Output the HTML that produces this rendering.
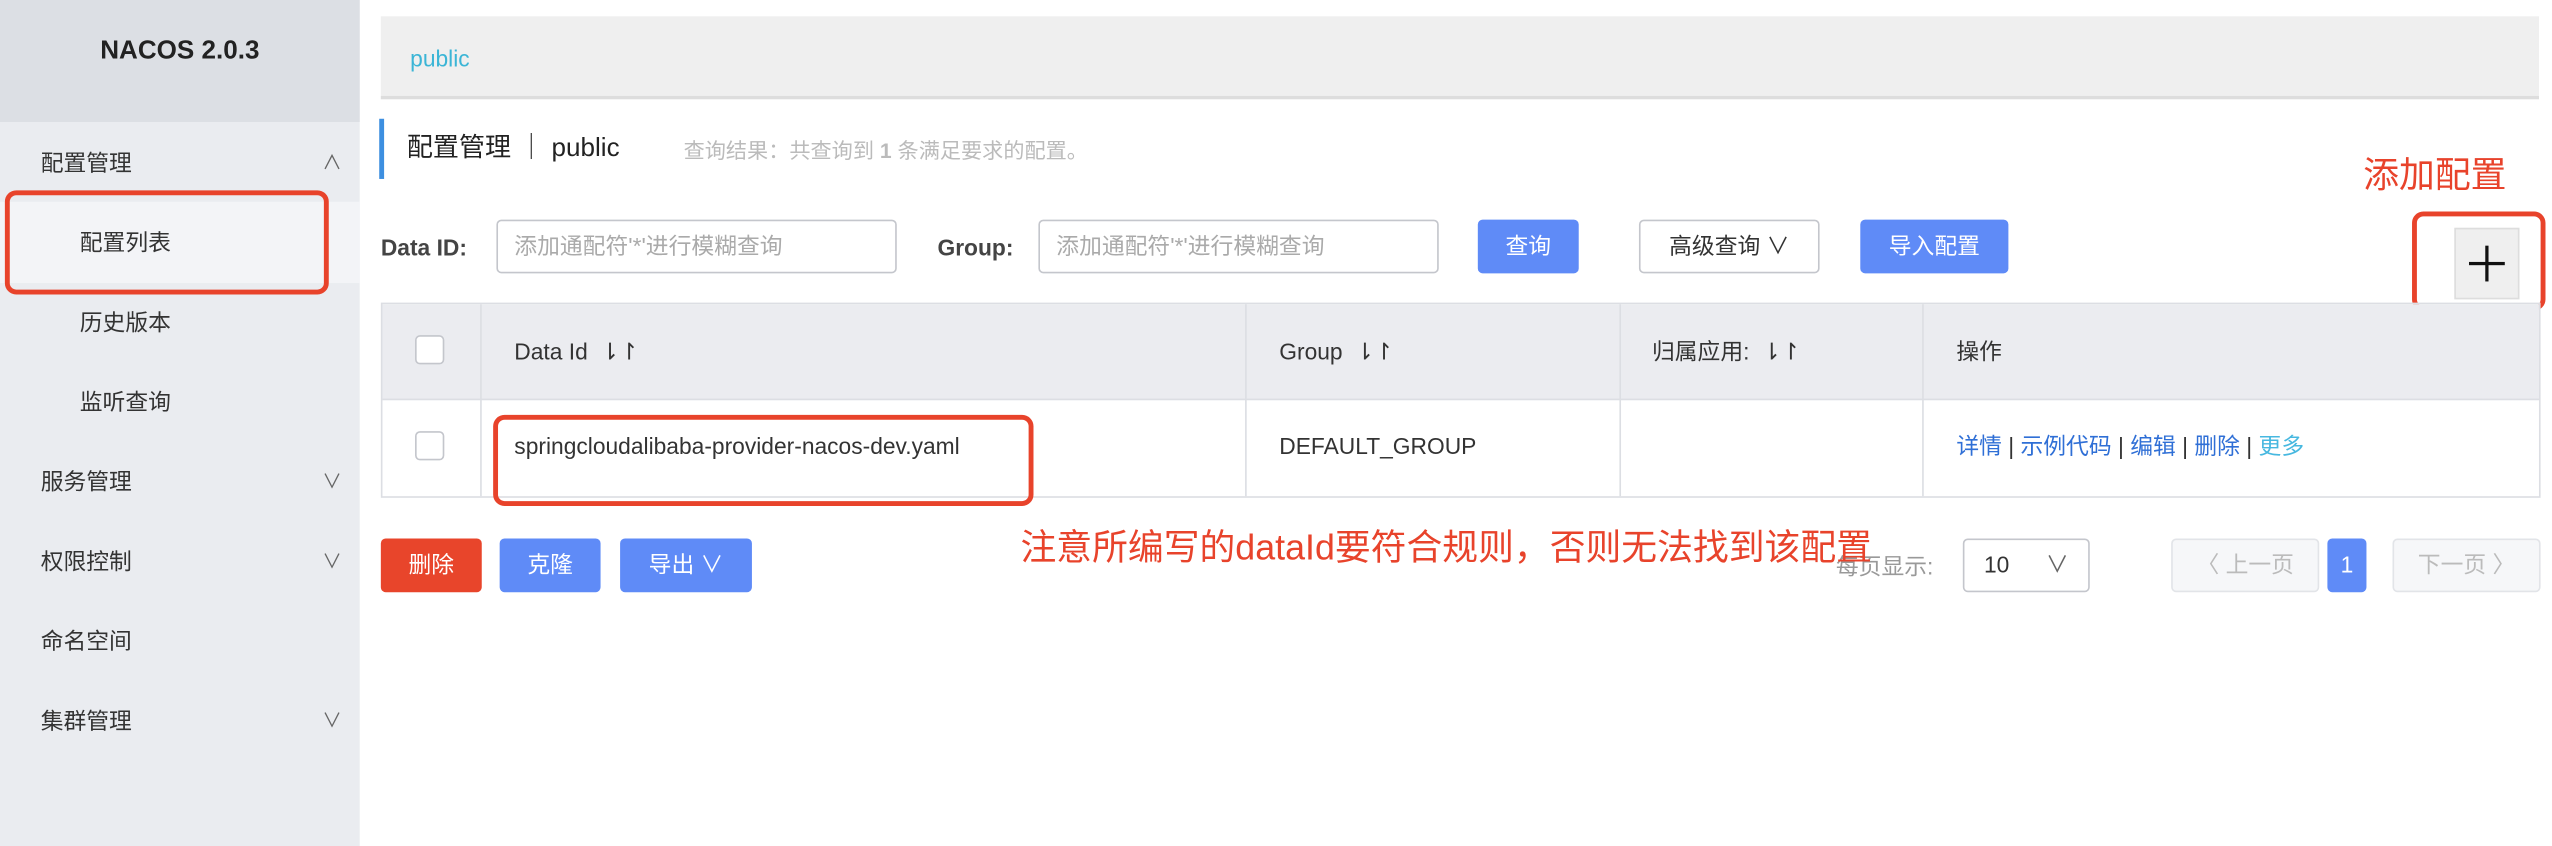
<!DOCTYPE html>
<html><head><meta charset="utf-8"><style>
*{margin:0;padding:0;box-sizing:border-box}
html,body{width:2552px;height:846px;overflow:hidden;background:#fff}
#w{position:absolute;left:0;top:0;width:1568px;height:520px;transform:scale(1.62755,1.6269);transform-origin:0 0;font-family:"Liberation Sans","Noto Sans CJK SC",sans-serif;color:#333;font-size:14px}
.a{position:absolute;white-space:nowrap;line-height:20px}
.side{position:absolute;left:0;top:0;width:221px;height:520px;background:#eaecf0}
.btn{position:absolute;height:33px;border-radius:3px;color:#fff;text-align:center;line-height:33px;font-size:14px}
.blue{background:#5f8bf7}
.inp{position:absolute;height:33px;border:1px solid #c4c6cc;border-radius:3px;color:#aaa;line-height:31px;padding-left:10px;font-size:14px;background:#fff}
.cb{position:absolute;width:18px;height:18px;border:1px solid #c4c6cc;border-radius:3px;background:#fff}
.red{position:absolute;border:3px solid #e8432b;border-radius:7px}
.vl{position:absolute;width:1px;background:#dcdee3}
</style></head><body><div id="w">
<div class="side">
<div class="a" style="left:0;top:0;width:221px;height:75px;background:#dcdfe4"></div>
<div class="a" style="left:0;top:22px;width:221px;text-align:center;font-weight:bold;font-size:16px;color:#222">NACOS 2.0.3</div>
<div class="a" style="left:0;top:124px;width:221px;height:50px;background:#f3f4f7"></div>
<div class="a" style="left:25px;top:90px">配置管理</div><div class="a" style="left:198px;top:90px;font-size:12px;color:#666">∧</div>
<div class="a" style="left:49px;top:139px">配置列表</div>
<div class="a" style="left:49px;top:188px">历史版本</div>
<div class="a" style="left:49px;top:237px">监听查询</div>
<div class="a" style="left:25px;top:286px">服务管理</div><div class="a" style="left:198px;top:286px;font-size:12px;color:#666">∨</div>
<div class="a" style="left:25px;top:335px">权限控制</div><div class="a" style="left:198px;top:335px;font-size:12px;color:#666">∨</div>
<div class="a" style="left:25px;top:384px">命名空间</div>
<div class="a" style="left:25px;top:433px">集群管理</div><div class="a" style="left:198px;top:433px;font-size:12px;color:#666">∨</div>
</div>
<div class="red" style="left:3px;top:117px;width:199px;height:64px"></div>
<div class="a" style="left:234px;top:10px;width:1326px;height:51px;background:#efefef;border-bottom:2px solid #ddd"></div>
<div class="a" style="left:252px;top:26px;color:#3bb5d6">public</div>
<div class="a" style="left:233px;top:73px;width:3px;height:37px;background:#3d8fe0"></div>
<div class="a" style="left:250px;top:82px;font-size:16px;color:#222">配置管理 ｜ public</div>
<div class="a" style="left:420px;top:83px;font-size:13px;color:#bbb">查询结果：共查询到 <b>1</b> 条满足要求的配置。</div>
<div class="a" style="left:1452px;top:95px;font-size:22px;line-height:26px;color:#e8432b">添加配置</div>
<div class="a" style="left:234px;top:142px;font-weight:bold;color:#444">Data ID:</div>
<div class="inp" style="left:305px;top:135px;width:246px">添加通配符'*'进行模糊查询</div>
<div class="a" style="left:576px;top:142px;font-weight:bold;color:#444">Group:</div>
<div class="inp" style="left:638px;top:135px;width:246px">添加通配符'*'进行模糊查询</div>
<div class="btn blue" style="left:908px;top:135px;width:62px">查询</div>
<div class="btn" style="left:1007px;top:135px;width:111px;border:1px solid #c4c6cc;color:#333;line-height:31px">高级查询 ∨</div>
<div class="btn blue" style="left:1143px;top:135px;width:91px">导入配置</div>
<div class="a" style="left:1508px;top:140px;width:40px;height:44px;background:#efefef;border:1px solid #ddd"></div>
<div class="a" style="left:1517px;top:161px;width:22px;height:2px;background:#111"></div>
<div class="a" style="left:1527px;top:151px;width:2px;height:22px;background:#111"></div>
<div class="red" style="left:1482px;top:130px;width:82px;height:61px"></div>
<div class="a" style="left:234px;top:186px;width:1327px;height:120px;border:1px solid #dcdee3"></div>
<div class="a" style="left:235px;top:187px;width:1325px;height:59px;background:#ebecf0;border-bottom:1px solid #dcdee3"></div>
<div class="vl" style="left:295px;top:187px;height:118px"></div>
<div class="vl" style="left:765px;top:187px;height:118px"></div>
<div class="vl" style="left:995px;top:187px;height:118px"></div>
<div class="vl" style="left:1181px;top:187px;height:118px"></div>
<div class="cb" style="left:255px;top:206px"></div>
<div class="cb" style="left:255px;top:265px"></div>
<div class="a" style="left:316px;top:206px">Data Id &nbsp;⇂↾</div>
<div class="a" style="left:786px;top:206px">Group &nbsp;⇂↾</div>
<div class="a" style="left:1015px;top:206px">归属应用: &nbsp;⇂↾</div>
<div class="a" style="left:1202px;top:206px">操作</div>
<div class="a" style="left:316px;top:264px">springcloudalibaba-provider-nacos-dev.yaml</div>
<div class="a" style="left:786px;top:264px">DEFAULT_GROUP</div>
<div class="a" style="left:1202px;top:264px;color:#2f6fd6">详情 <span style="color:#333">|</span> 示例代码 <span style="color:#333">|</span> 编辑 <span style="color:#333">|</span> 删除 <span style="color:#333">|</span> <span style="color:#47b8e0">更多</span></div>
<div class="red" style="left:303px;top:255px;width:332px;height:56px"></div>
<div class="btn" style="left:234px;top:331px;width:62px;background:#e8452b">删除</div>
<div class="btn blue" style="left:307px;top:331px;width:62px">克隆</div>
<div class="btn blue" style="left:381px;top:331px;width:81px">导出 ∨</div>
<div class="a" style="left:1128px;top:338px;color:#999">每页显示:</div>
<div class="a" style="left:627px;top:324px;font-size:22px;line-height:26px;color:#e8432b">注意所编写的dataId要符合规则，否则无法找到该配置</div>
<div class="btn" style="left:1206px;top:331px;width:78px;border:1px solid #c4c6cc;color:#333;text-align:left;padding-left:12px;line-height:31px">10<span style="position:absolute;right:12px;color:#666">∨</span></div>
<div class="btn" style="left:1334px;top:331px;width:91px;border:1px solid #e2e4e8;background:#f6f7f9;color:#bbb;line-height:31px">〈 上一页</div>
<div class="btn blue" style="left:1430px;top:331px;width:24px">1</div>
<div class="btn" style="left:1470px;top:331px;width:91px;border:1px solid #e2e4e8;background:#f6f7f9;color:#bbb;line-height:31px">下一页 〉</div>
</div></body></html>
